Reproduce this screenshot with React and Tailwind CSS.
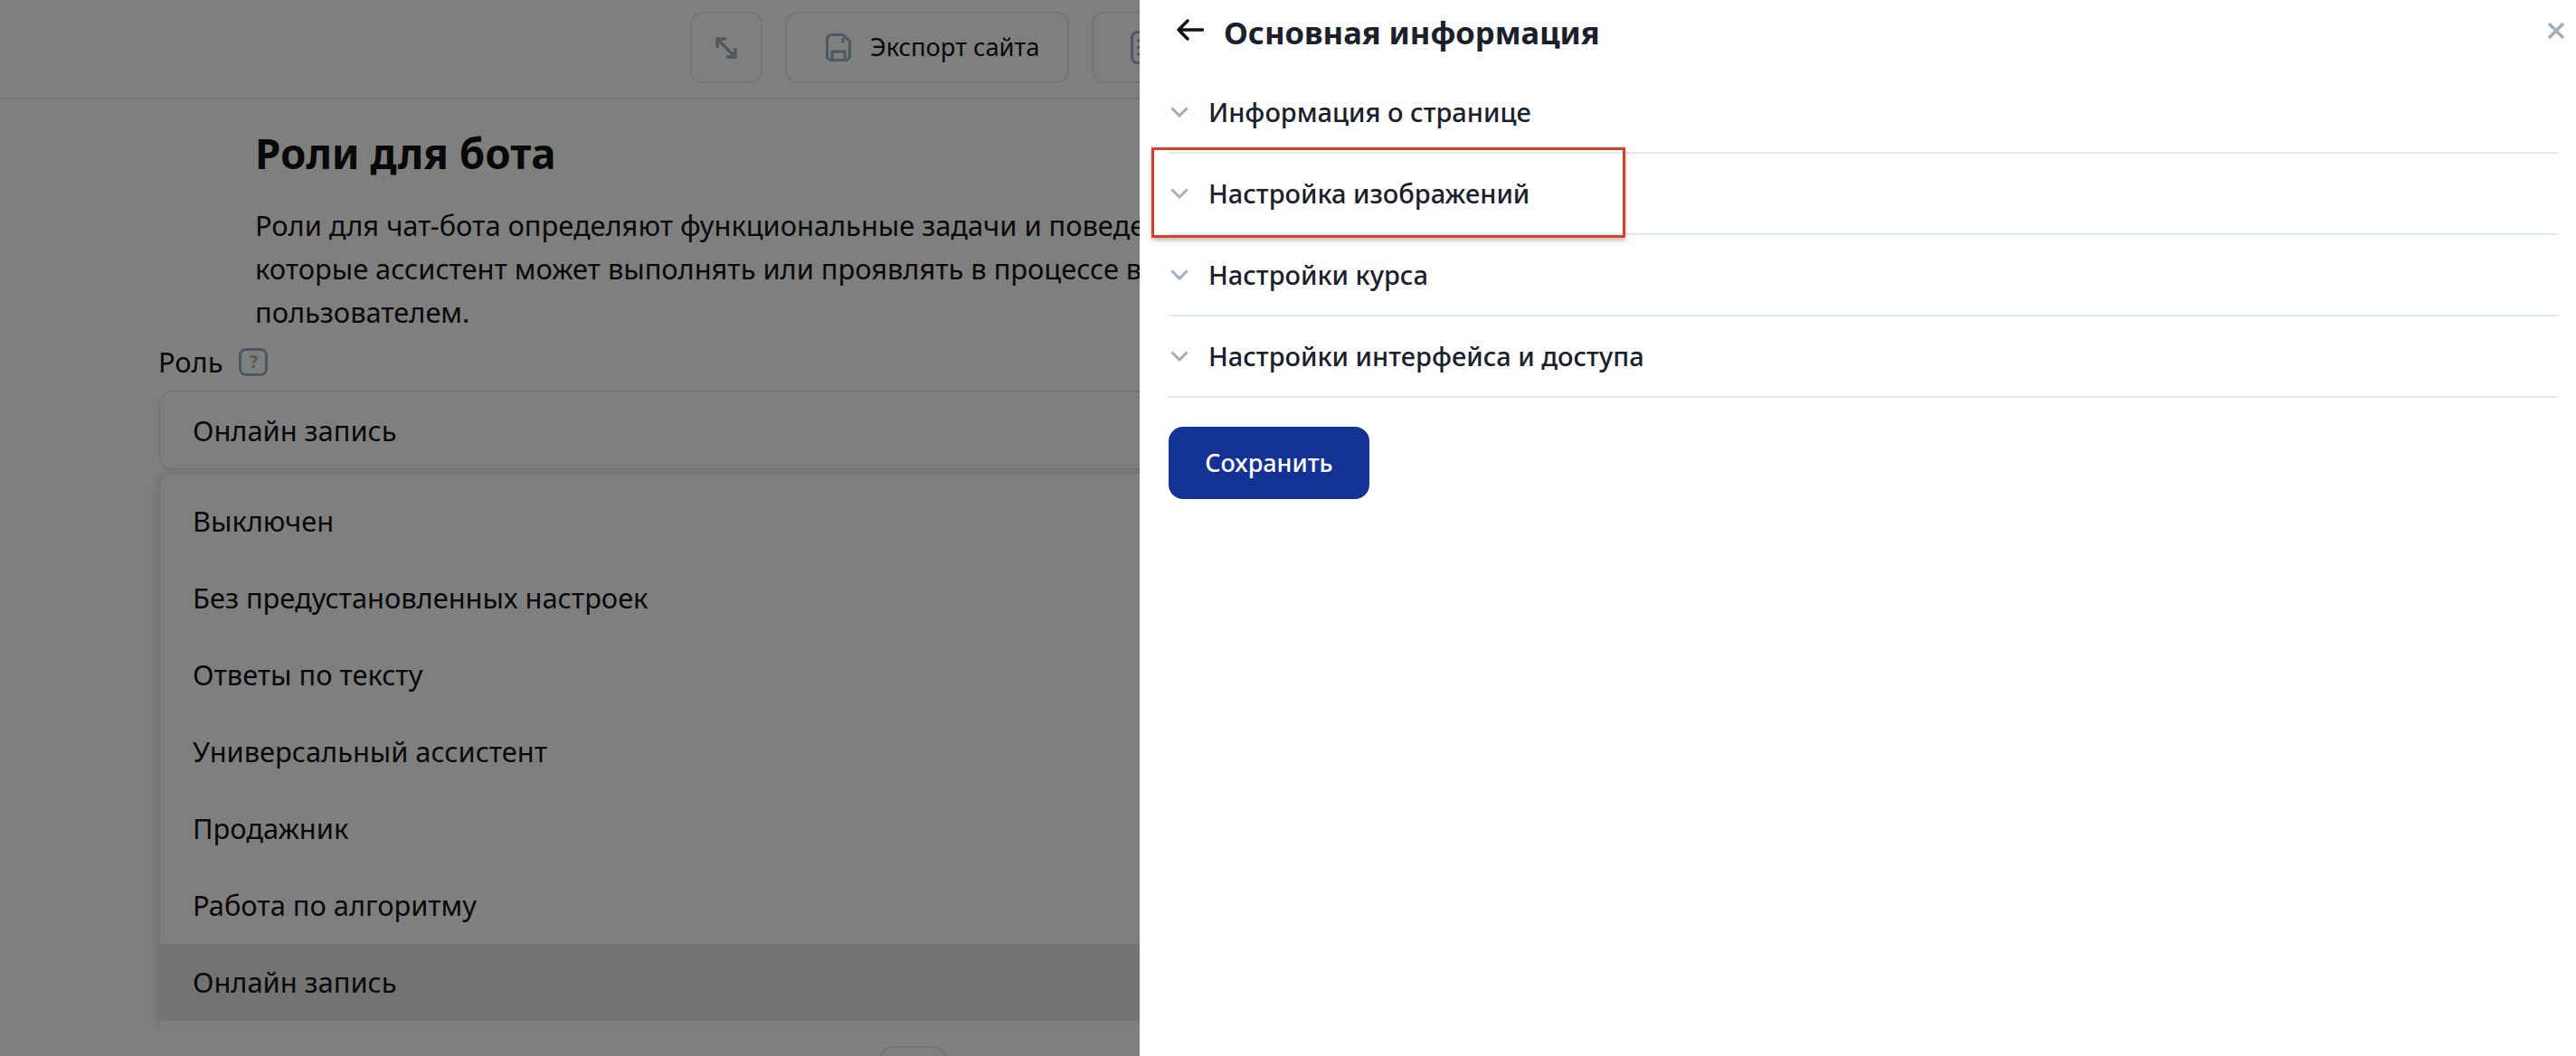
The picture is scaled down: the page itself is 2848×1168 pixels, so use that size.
import { MoveDiagonal2 } from 'lucide-react'

const sections = ['Информация о странице', 'Настройка изображений', 'Настройки курса', 'Настройки интерфейса и доступа']

const roles = ['Выключен', 'Без предустановленных настроек', 'Ответы по тексту', 'Универсальный ассистент', 'Продажник', 'Работа по алгоритму', 'Онлайн запись']

const App = () => {
  return (
    <div className="relative h-screen w-full overflow-hidden bg-white font-['Noto_Sans',sans-serif] text-[#111]">
      {/* Page under the overlay */}
      <div className="h-full w-[1260px] overflow-hidden">
        <div className="h-[110px] border-b-2 border-[#e2e8f0] pt-[13px] pl-[763px]">
          <div className="flex gap-[25px]">
            <button className="flex h-[79px] w-[80px] shrink-0 items-center justify-center rounded-[14px] border-2 border-[#e2e8f0] text-[#a0aec0]">
              <MoveDiagonal2 size={34} strokeWidth={2.5} />
            </button>
            <button className="flex h-[79px] w-[314px] shrink-0 items-center gap-[21px] rounded-[14px] border-2 border-[#e2e8f0] pl-[43px] text-[27.3px]">
              <svg width="28" height="31" viewBox="0 0 28 31" fill="none" stroke="#a0aec0" strokeWidth="3" strokeLinejoin="round">
                <path d="M6 1.5h13l7.500 7v16a5 5 0 0 1-5 5H6a4.500 4.500 0 0 1-4.500-4.500V6A4.500 4.500 0 0 1 6 1.500z" />
                <path d="M7 29v-9h14v9M19 5v5" />
              </svg>
              Экспорт сайта
            </button>
            <button className="flex h-[79px] w-[200px] shrink-0 items-center rounded-[14px] border-2 border-[#e2e8f0] pl-[41px]">
              <svg width="30" height="37" viewBox="0 0 30 37" fill="none" stroke="#a0aec0" strokeWidth="3">
                <rect x="1.500" y="1.500" width="27" height="34" rx="6" />
                <path d="M7 11h16M7 18.500h16M7 26h16" />
              </svg>
            </button>
          </div>
        </div>

        <div className="pl-[282px] pt-[29px]">
          <h1 className="text-[45.7px] leading-[60px] font-bold">Роли для бота</h1>
          <p className="mt-[26px] text-[30.8px] leading-[48px] whitespace-nowrap">
            Роли для чат-бота определяют функциональные задачи и поведение,
            <br />
            которые ассистент может выполнять или проявлять в процессе взаимодействия
            <br />
            пользователем.
          </p>
        </div>

        <div className="ml-[175px] w-[1400px]">
          <div className="mt-[15px] flex h-[32px] items-center gap-[18px] text-[30.8px]">
            <span>Роль</span>
            <span className="flex h-[31px] w-[32px] items-center justify-center rounded-[8px] border-[3px] border-[#a0aec0] text-[19px] font-bold text-[#a0aec0]">?</span>
          </div>
          <div className="mt-[16px] flex h-[88px] items-center rounded-[16px] border-2 border-[#e2e8f0] pl-[36px] text-[30.8px]">
            Онлайн запись
          </div>
          <div className="mt-[2px] h-[617px] overflow-hidden rounded-t-[16px] border-x-2 border-t-2 border-[#e2e8f0] pt-[10px] shadow-[-4px_0_10px_rgba(0,0,0,0.08)]">
            {roles.map((role, index) => (
              <div
                key={role}
                className={`flex h-[85px] items-center pl-[36px] text-[30.8px] ${index === roles.length - 1 ? 'bg-[#e6e6e6]' : ''}`}
              >
                {role}
              </div>
            ))}
          </div>
          <div className="mt-[18px] ml-[798px] h-[40px] w-[73px] rounded-[14px] border-2 border-[#e2e8f0]" />
        </div>
      </div>

      <div className="absolute inset-0 bg-black/50" />

      {/* Side panel */}
      <div className="absolute top-0 right-0 bottom-0 w-[1588px] bg-white pr-[20px] pl-[32px] text-[#1a202c]">
        <div className="flex h-[80px] items-start pt-[14px]">
          <svg className="mt-[7px] ml-[9px]" width="30" height="24" viewBox="0 0 30 24" fill="none" stroke="#111" strokeWidth="3.500" strokeLinecap="round" strokeLinejoin="round">
            <path d="M28.500 12H2M12 2 2 12l10 10" />
          </svg>
          <h2 className="ml-[22px] text-[34.500px] leading-[44px] font-bold">Основная информация</h2>
        </div>

        {sections.map((section) => (
          <div key={section} className="flex h-[90px] items-center border-b-2 border-[#e2e8f0]">
            <svg className="ml-[2px]" width="20" height="12" viewBox="0 0 20 12" fill="none" stroke="#a0aec0" strokeWidth="3">
              <path d="M1.500 1.500 10 10l8.500-8.500" />
            </svg>
            <span className="ml-[22px] text-[29px] font-medium">{section}</span>
          </div>
        ))}

        <button className="mt-[32px] h-[80px] w-[222px] rounded-[16px] bg-[#143294] text-[27px] font-medium text-white">
          Сохранить
        </button>

        <svg className="absolute top-[24px] right-[12px]" width="20" height="20" viewBox="0 0 20 20" fill="none" stroke="#a0aec0" strokeWidth="3.500">
          <path d="m2 2 16 16M18 2 2 18" />
        </svg>
      </div>

      {/* Red annotation frame */}
      <div className="absolute top-[163px] left-[1273px] h-[100px] w-[524px] border-[3px] border-[#d8402a] shadow-[0_3px_5px_rgba(0,0,0,0.25)]" />
    </div>
  )
}

export default App
